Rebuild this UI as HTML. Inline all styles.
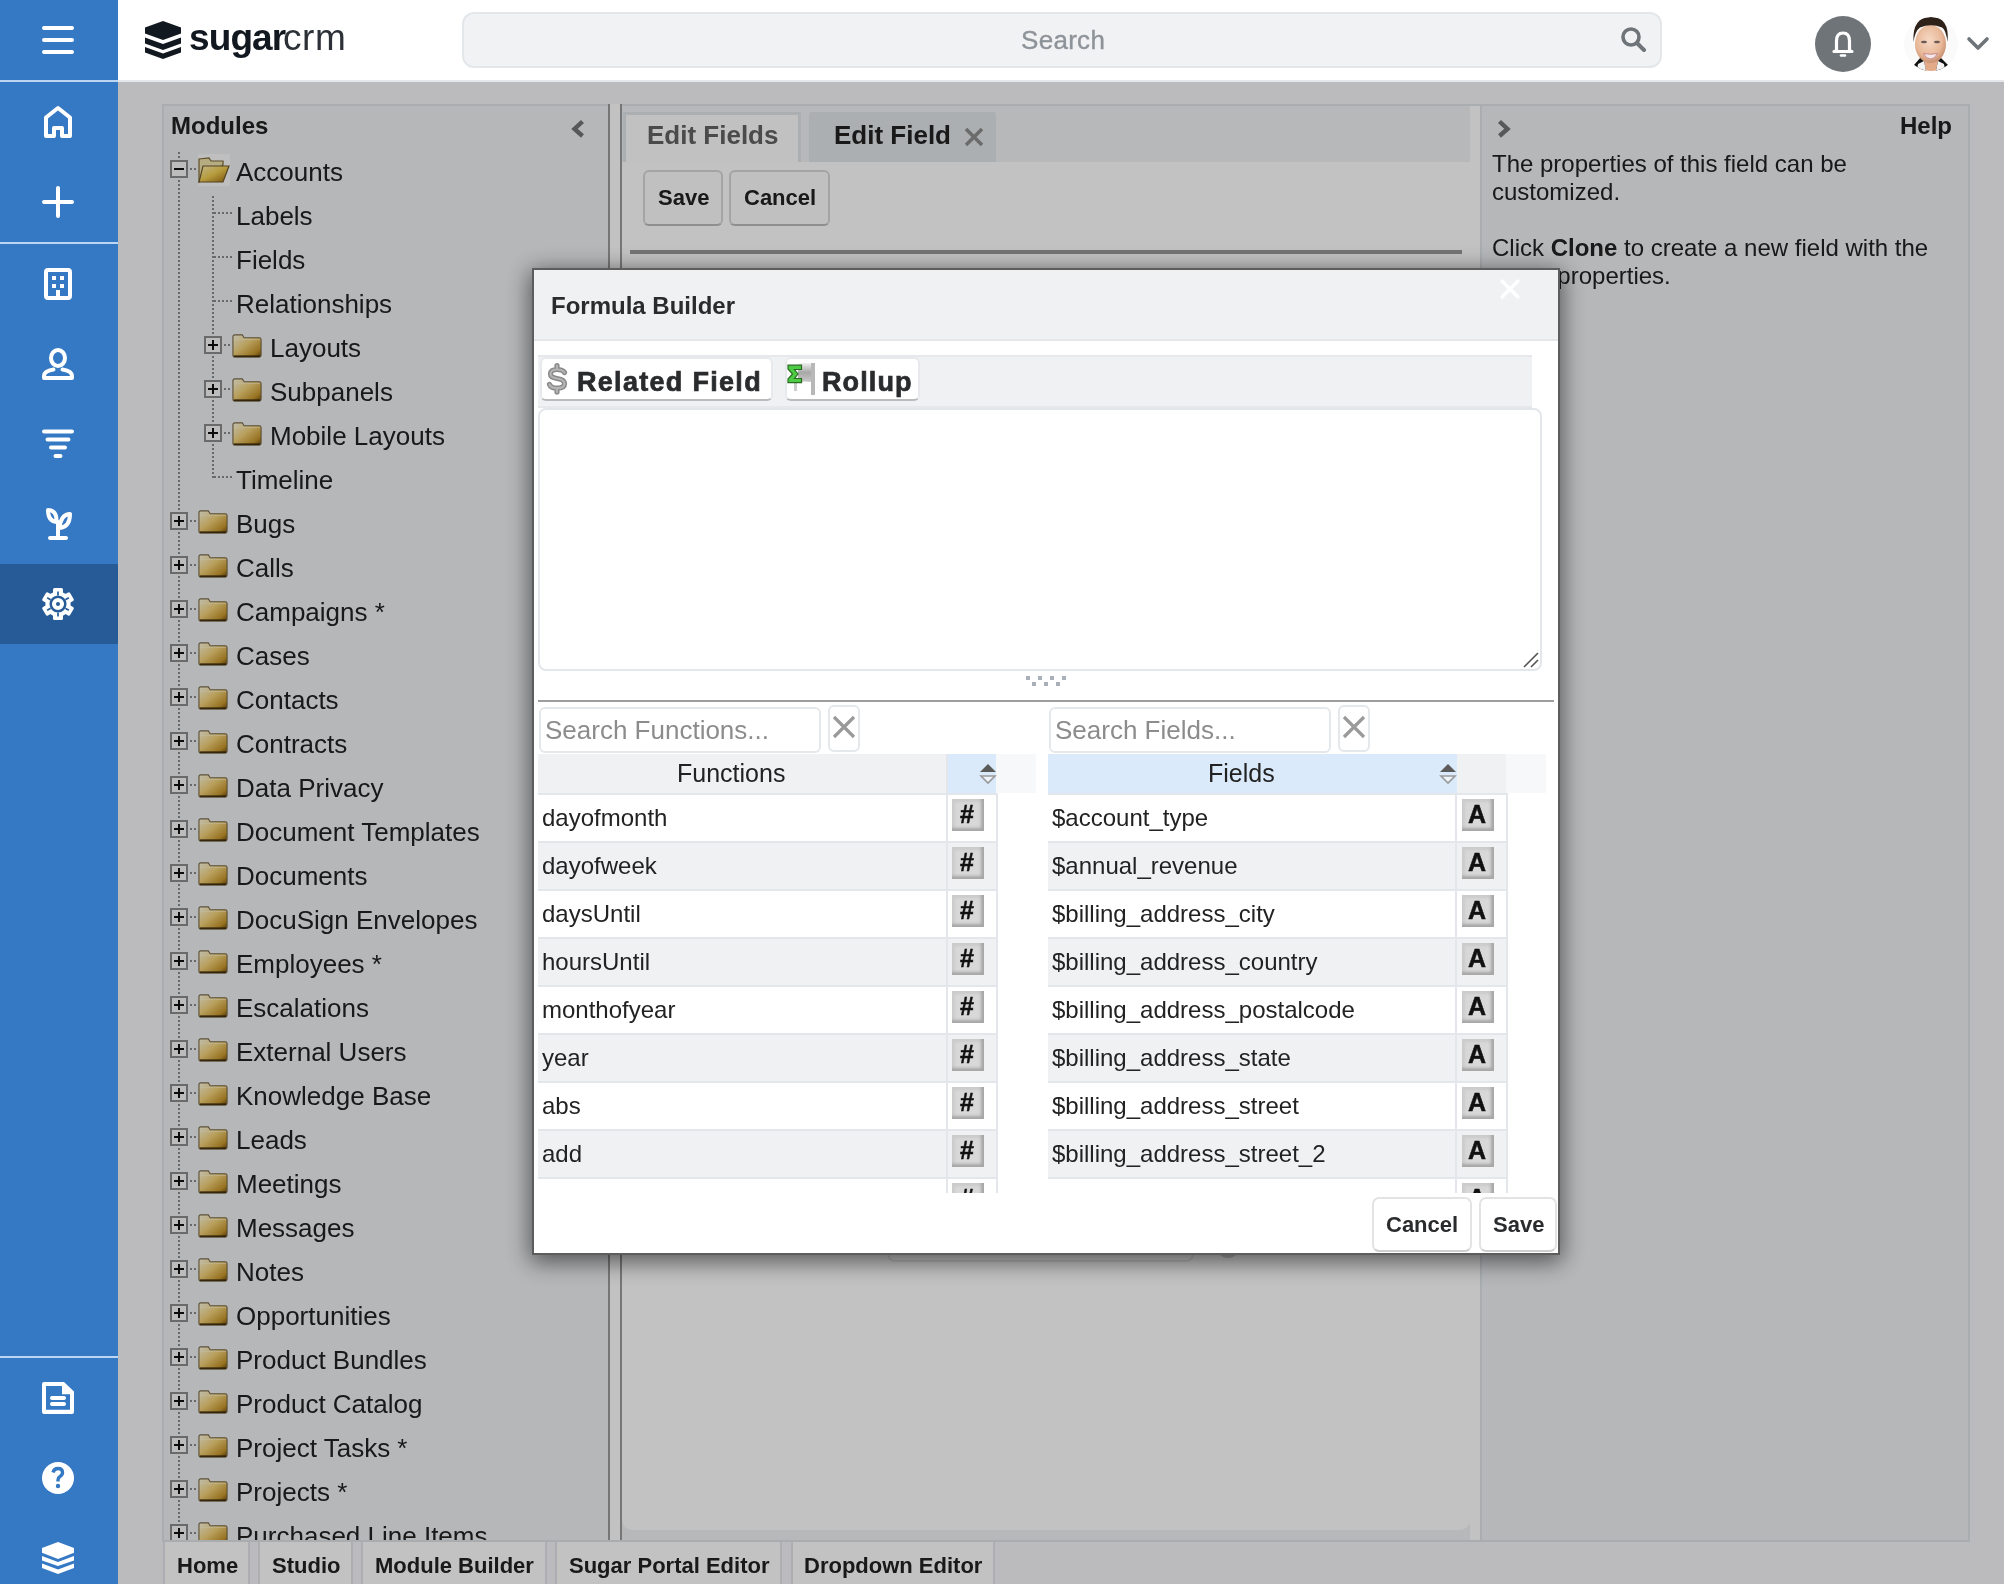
<!DOCTYPE html><html><head><meta charset="utf-8"><style>
html,body{margin:0;padding:0;}
body{width:2004px;height:1584px;position:relative;overflow:hidden;background:#f6f6f8;font-family:"Liberation Sans", sans-serif;color:#222;}
.t{position:absolute;white-space:nowrap;will-change:transform;}
.b{position:absolute;box-sizing:border-box;}
svg{position:absolute;overflow:visible;}
</style></head><body>
<div class="b" style="left:118px;top:82px;width:1886px;height:1502px;background:#f6f6f9;"></div>
<div class="b" style="left:162px;top:104px;width:446px;height:1437px;background:#eff1f3;border-left:2px solid #dee4e8;border-top:2px solid #dee4e8;"></div>
<div class="t" style="left:171px;top:113.7px;font-size:24px;line-height:24px;font-weight:bold;color:#222;">Modules</div>
<svg style="left:568px;top:116px;filter:blur(0.5px)" width="20" height="24"><path d="M14.5 5.5 L6.5 13 L14.5 20" fill="none" stroke="#747474" stroke-width="4.4"/></svg>
<div style="position:absolute;left:162px;top:104px;width:446px;height:1436px;overflow:hidden;">
<div class="b" style="left:16px;top:48px;width:2px;height:1388px;background-image:linear-gradient(to bottom,#8a8a8a 50%,transparent 50%);background-size:2px 4px;"></div>
<div class="b" style="left:50px;top:92px;width:2px;height:282px;background-image:linear-gradient(to bottom,#8a8a8a 50%,transparent 50%);background-size:2px 4px;"></div>
<div class="b" style="left:8px;top:56px;width:18px;height:18px;border:2px solid #8c8c8c;background:#f8f8f8;"></div>
<div class="b" style="left:12px;top:64px;width:10px;height:2px;background:#111;"></div>
<div class="b" style="left:28px;top:64px;width:8px;height:2px;background-image:linear-gradient(to right,#8a8a8a 50%,transparent 50%);background-size:4px 2px;"></div>
<div class="b" style="left:36px;top:50px;width:32px;height:32px;background:#fbfbfb;"></div><svg style="left:36px;top:50px" width="32" height="32" viewBox="0 0 32 32"><defs><linearGradient id="fo" x1="0" y1="0" x2="1" y2="1"><stop offset="0" stop-color="#fff4b8"/><stop offset="0.5" stop-color="#f0cc50"/><stop offset="1" stop-color="#9a6a10"/></linearGradient></defs><path d="M1 5 L11 4 L13 7 L25 7 L25 11 L1 28 Z" fill="#efe3aa" stroke="#7a6634" stroke-width="1.2"/><path d="M5 12 L31 12 L25 28 L1 28 Z" fill="url(#fo)" stroke="#6d5a2e" stroke-width="1.2"/></svg>
<div class="t" style="left:74px;top:55.0px;font-size:26px;line-height:26px;">Accounts</div>
<div class="b" style="left:52px;top:108px;width:18px;height:2px;background-image:linear-gradient(to right,#8a8a8a 50%,transparent 50%);background-size:4px 2px;"></div>
<div class="t" style="left:74px;top:99.0px;font-size:26px;line-height:26px;">Labels</div>
<div class="b" style="left:52px;top:152px;width:18px;height:2px;background-image:linear-gradient(to right,#8a8a8a 50%,transparent 50%);background-size:4px 2px;"></div>
<div class="t" style="left:74px;top:143.0px;font-size:26px;line-height:26px;">Fields</div>
<div class="b" style="left:52px;top:196px;width:18px;height:2px;background-image:linear-gradient(to right,#8a8a8a 50%,transparent 50%);background-size:4px 2px;"></div>
<div class="t" style="left:74px;top:187.0px;font-size:26px;line-height:26px;">Relationships</div>
<div class="b" style="left:42px;top:232px;width:18px;height:18px;border:2px solid #8c8c8c;background:#f8f8f8;"></div>
<div class="b" style="left:46px;top:240px;width:10px;height:2px;background:#111;"></div>
<div class="b" style="left:50px;top:236px;width:2px;height:10px;background:#111;"></div>
<div class="b" style="left:62px;top:240px;width:8px;height:2px;background-image:linear-gradient(to right,#8a8a8a 50%,transparent 50%);background-size:4px 2px;"></div>
<svg style="left:70px;top:230px" width="30" height="24" viewBox="0 0 32 26" preserveAspectRatio="none"><defs><linearGradient id="fg" x1="0" y1="0" x2="1" y2="1"><stop offset="0" stop-color="#fffbe6"/><stop offset="0.45" stop-color="#f2d27a"/><stop offset="0.8" stop-color="#c8982e"/><stop offset="1" stop-color="#6a4808"/></linearGradient></defs><path d="M1 3 Q1 1 3 1 L11 1 L13 4 L29 4 Q31 4 31 6 L31 23 Q31 25 29 25 L3 25 Q1 25 1 23 Z" fill="url(#fg)" stroke="#7a6a48" stroke-width="1.2"/><path d="M2 24 H30" stroke="#3a2a10" stroke-width="1.6"/><path d="M2 6 L30 6" stroke="#fff6d0" stroke-width="1" opacity="0.6"/></svg>
<div class="t" style="left:108px;top:231.0px;font-size:26px;line-height:26px;">Layouts</div>
<div class="b" style="left:42px;top:276px;width:18px;height:18px;border:2px solid #8c8c8c;background:#f8f8f8;"></div>
<div class="b" style="left:46px;top:284px;width:10px;height:2px;background:#111;"></div>
<div class="b" style="left:50px;top:280px;width:2px;height:10px;background:#111;"></div>
<div class="b" style="left:62px;top:284px;width:8px;height:2px;background-image:linear-gradient(to right,#8a8a8a 50%,transparent 50%);background-size:4px 2px;"></div>
<svg style="left:70px;top:274px" width="30" height="24" viewBox="0 0 32 26" preserveAspectRatio="none"><defs><linearGradient id="fg" x1="0" y1="0" x2="1" y2="1"><stop offset="0" stop-color="#fffbe6"/><stop offset="0.45" stop-color="#f2d27a"/><stop offset="0.8" stop-color="#c8982e"/><stop offset="1" stop-color="#6a4808"/></linearGradient></defs><path d="M1 3 Q1 1 3 1 L11 1 L13 4 L29 4 Q31 4 31 6 L31 23 Q31 25 29 25 L3 25 Q1 25 1 23 Z" fill="url(#fg)" stroke="#7a6a48" stroke-width="1.2"/><path d="M2 24 H30" stroke="#3a2a10" stroke-width="1.6"/><path d="M2 6 L30 6" stroke="#fff6d0" stroke-width="1" opacity="0.6"/></svg>
<div class="t" style="left:108px;top:275.0px;font-size:26px;line-height:26px;">Subpanels</div>
<div class="b" style="left:42px;top:320px;width:18px;height:18px;border:2px solid #8c8c8c;background:#f8f8f8;"></div>
<div class="b" style="left:46px;top:328px;width:10px;height:2px;background:#111;"></div>
<div class="b" style="left:50px;top:324px;width:2px;height:10px;background:#111;"></div>
<div class="b" style="left:62px;top:328px;width:8px;height:2px;background-image:linear-gradient(to right,#8a8a8a 50%,transparent 50%);background-size:4px 2px;"></div>
<svg style="left:70px;top:318px" width="30" height="24" viewBox="0 0 32 26" preserveAspectRatio="none"><defs><linearGradient id="fg" x1="0" y1="0" x2="1" y2="1"><stop offset="0" stop-color="#fffbe6"/><stop offset="0.45" stop-color="#f2d27a"/><stop offset="0.8" stop-color="#c8982e"/><stop offset="1" stop-color="#6a4808"/></linearGradient></defs><path d="M1 3 Q1 1 3 1 L11 1 L13 4 L29 4 Q31 4 31 6 L31 23 Q31 25 29 25 L3 25 Q1 25 1 23 Z" fill="url(#fg)" stroke="#7a6a48" stroke-width="1.2"/><path d="M2 24 H30" stroke="#3a2a10" stroke-width="1.6"/><path d="M2 6 L30 6" stroke="#fff6d0" stroke-width="1" opacity="0.6"/></svg>
<div class="t" style="left:108px;top:319.0px;font-size:26px;line-height:26px;">Mobile Layouts</div>
<div class="b" style="left:52px;top:372px;width:18px;height:2px;background-image:linear-gradient(to right,#8a8a8a 50%,transparent 50%);background-size:4px 2px;"></div>
<div class="t" style="left:74px;top:363.0px;font-size:26px;line-height:26px;">Timeline</div>
<div class="b" style="left:8px;top:408px;width:18px;height:18px;border:2px solid #8c8c8c;background:#f8f8f8;"></div>
<div class="b" style="left:12px;top:416px;width:10px;height:2px;background:#111;"></div>
<div class="b" style="left:16px;top:412px;width:2px;height:10px;background:#111;"></div>
<div class="b" style="left:28px;top:416px;width:8px;height:2px;background-image:linear-gradient(to right,#8a8a8a 50%,transparent 50%);background-size:4px 2px;"></div>
<svg style="left:36px;top:406px" width="30" height="24" viewBox="0 0 32 26" preserveAspectRatio="none"><defs><linearGradient id="fg" x1="0" y1="0" x2="1" y2="1"><stop offset="0" stop-color="#fffbe6"/><stop offset="0.45" stop-color="#f2d27a"/><stop offset="0.8" stop-color="#c8982e"/><stop offset="1" stop-color="#6a4808"/></linearGradient></defs><path d="M1 3 Q1 1 3 1 L11 1 L13 4 L29 4 Q31 4 31 6 L31 23 Q31 25 29 25 L3 25 Q1 25 1 23 Z" fill="url(#fg)" stroke="#7a6a48" stroke-width="1.2"/><path d="M2 24 H30" stroke="#3a2a10" stroke-width="1.6"/><path d="M2 6 L30 6" stroke="#fff6d0" stroke-width="1" opacity="0.6"/></svg>
<div class="t" style="left:74px;top:407.0px;font-size:26px;line-height:26px;">Bugs</div>
<div class="b" style="left:8px;top:452px;width:18px;height:18px;border:2px solid #8c8c8c;background:#f8f8f8;"></div>
<div class="b" style="left:12px;top:460px;width:10px;height:2px;background:#111;"></div>
<div class="b" style="left:16px;top:456px;width:2px;height:10px;background:#111;"></div>
<div class="b" style="left:28px;top:460px;width:8px;height:2px;background-image:linear-gradient(to right,#8a8a8a 50%,transparent 50%);background-size:4px 2px;"></div>
<svg style="left:36px;top:450px" width="30" height="24" viewBox="0 0 32 26" preserveAspectRatio="none"><defs><linearGradient id="fg" x1="0" y1="0" x2="1" y2="1"><stop offset="0" stop-color="#fffbe6"/><stop offset="0.45" stop-color="#f2d27a"/><stop offset="0.8" stop-color="#c8982e"/><stop offset="1" stop-color="#6a4808"/></linearGradient></defs><path d="M1 3 Q1 1 3 1 L11 1 L13 4 L29 4 Q31 4 31 6 L31 23 Q31 25 29 25 L3 25 Q1 25 1 23 Z" fill="url(#fg)" stroke="#7a6a48" stroke-width="1.2"/><path d="M2 24 H30" stroke="#3a2a10" stroke-width="1.6"/><path d="M2 6 L30 6" stroke="#fff6d0" stroke-width="1" opacity="0.6"/></svg>
<div class="t" style="left:74px;top:451.0px;font-size:26px;line-height:26px;">Calls</div>
<div class="b" style="left:8px;top:496px;width:18px;height:18px;border:2px solid #8c8c8c;background:#f8f8f8;"></div>
<div class="b" style="left:12px;top:504px;width:10px;height:2px;background:#111;"></div>
<div class="b" style="left:16px;top:500px;width:2px;height:10px;background:#111;"></div>
<div class="b" style="left:28px;top:504px;width:8px;height:2px;background-image:linear-gradient(to right,#8a8a8a 50%,transparent 50%);background-size:4px 2px;"></div>
<svg style="left:36px;top:494px" width="30" height="24" viewBox="0 0 32 26" preserveAspectRatio="none"><defs><linearGradient id="fg" x1="0" y1="0" x2="1" y2="1"><stop offset="0" stop-color="#fffbe6"/><stop offset="0.45" stop-color="#f2d27a"/><stop offset="0.8" stop-color="#c8982e"/><stop offset="1" stop-color="#6a4808"/></linearGradient></defs><path d="M1 3 Q1 1 3 1 L11 1 L13 4 L29 4 Q31 4 31 6 L31 23 Q31 25 29 25 L3 25 Q1 25 1 23 Z" fill="url(#fg)" stroke="#7a6a48" stroke-width="1.2"/><path d="M2 24 H30" stroke="#3a2a10" stroke-width="1.6"/><path d="M2 6 L30 6" stroke="#fff6d0" stroke-width="1" opacity="0.6"/></svg>
<div class="t" style="left:74px;top:495.0px;font-size:26px;line-height:26px;">Campaigns *</div>
<div class="b" style="left:8px;top:540px;width:18px;height:18px;border:2px solid #8c8c8c;background:#f8f8f8;"></div>
<div class="b" style="left:12px;top:548px;width:10px;height:2px;background:#111;"></div>
<div class="b" style="left:16px;top:544px;width:2px;height:10px;background:#111;"></div>
<div class="b" style="left:28px;top:548px;width:8px;height:2px;background-image:linear-gradient(to right,#8a8a8a 50%,transparent 50%);background-size:4px 2px;"></div>
<svg style="left:36px;top:538px" width="30" height="24" viewBox="0 0 32 26" preserveAspectRatio="none"><defs><linearGradient id="fg" x1="0" y1="0" x2="1" y2="1"><stop offset="0" stop-color="#fffbe6"/><stop offset="0.45" stop-color="#f2d27a"/><stop offset="0.8" stop-color="#c8982e"/><stop offset="1" stop-color="#6a4808"/></linearGradient></defs><path d="M1 3 Q1 1 3 1 L11 1 L13 4 L29 4 Q31 4 31 6 L31 23 Q31 25 29 25 L3 25 Q1 25 1 23 Z" fill="url(#fg)" stroke="#7a6a48" stroke-width="1.2"/><path d="M2 24 H30" stroke="#3a2a10" stroke-width="1.6"/><path d="M2 6 L30 6" stroke="#fff6d0" stroke-width="1" opacity="0.6"/></svg>
<div class="t" style="left:74px;top:539.0px;font-size:26px;line-height:26px;">Cases</div>
<div class="b" style="left:8px;top:584px;width:18px;height:18px;border:2px solid #8c8c8c;background:#f8f8f8;"></div>
<div class="b" style="left:12px;top:592px;width:10px;height:2px;background:#111;"></div>
<div class="b" style="left:16px;top:588px;width:2px;height:10px;background:#111;"></div>
<div class="b" style="left:28px;top:592px;width:8px;height:2px;background-image:linear-gradient(to right,#8a8a8a 50%,transparent 50%);background-size:4px 2px;"></div>
<svg style="left:36px;top:582px" width="30" height="24" viewBox="0 0 32 26" preserveAspectRatio="none"><defs><linearGradient id="fg" x1="0" y1="0" x2="1" y2="1"><stop offset="0" stop-color="#fffbe6"/><stop offset="0.45" stop-color="#f2d27a"/><stop offset="0.8" stop-color="#c8982e"/><stop offset="1" stop-color="#6a4808"/></linearGradient></defs><path d="M1 3 Q1 1 3 1 L11 1 L13 4 L29 4 Q31 4 31 6 L31 23 Q31 25 29 25 L3 25 Q1 25 1 23 Z" fill="url(#fg)" stroke="#7a6a48" stroke-width="1.2"/><path d="M2 24 H30" stroke="#3a2a10" stroke-width="1.6"/><path d="M2 6 L30 6" stroke="#fff6d0" stroke-width="1" opacity="0.6"/></svg>
<div class="t" style="left:74px;top:583.0px;font-size:26px;line-height:26px;">Contacts</div>
<div class="b" style="left:8px;top:628px;width:18px;height:18px;border:2px solid #8c8c8c;background:#f8f8f8;"></div>
<div class="b" style="left:12px;top:636px;width:10px;height:2px;background:#111;"></div>
<div class="b" style="left:16px;top:632px;width:2px;height:10px;background:#111;"></div>
<div class="b" style="left:28px;top:636px;width:8px;height:2px;background-image:linear-gradient(to right,#8a8a8a 50%,transparent 50%);background-size:4px 2px;"></div>
<svg style="left:36px;top:626px" width="30" height="24" viewBox="0 0 32 26" preserveAspectRatio="none"><defs><linearGradient id="fg" x1="0" y1="0" x2="1" y2="1"><stop offset="0" stop-color="#fffbe6"/><stop offset="0.45" stop-color="#f2d27a"/><stop offset="0.8" stop-color="#c8982e"/><stop offset="1" stop-color="#6a4808"/></linearGradient></defs><path d="M1 3 Q1 1 3 1 L11 1 L13 4 L29 4 Q31 4 31 6 L31 23 Q31 25 29 25 L3 25 Q1 25 1 23 Z" fill="url(#fg)" stroke="#7a6a48" stroke-width="1.2"/><path d="M2 24 H30" stroke="#3a2a10" stroke-width="1.6"/><path d="M2 6 L30 6" stroke="#fff6d0" stroke-width="1" opacity="0.6"/></svg>
<div class="t" style="left:74px;top:627.0px;font-size:26px;line-height:26px;">Contracts</div>
<div class="b" style="left:8px;top:672px;width:18px;height:18px;border:2px solid #8c8c8c;background:#f8f8f8;"></div>
<div class="b" style="left:12px;top:680px;width:10px;height:2px;background:#111;"></div>
<div class="b" style="left:16px;top:676px;width:2px;height:10px;background:#111;"></div>
<div class="b" style="left:28px;top:680px;width:8px;height:2px;background-image:linear-gradient(to right,#8a8a8a 50%,transparent 50%);background-size:4px 2px;"></div>
<svg style="left:36px;top:670px" width="30" height="24" viewBox="0 0 32 26" preserveAspectRatio="none"><defs><linearGradient id="fg" x1="0" y1="0" x2="1" y2="1"><stop offset="0" stop-color="#fffbe6"/><stop offset="0.45" stop-color="#f2d27a"/><stop offset="0.8" stop-color="#c8982e"/><stop offset="1" stop-color="#6a4808"/></linearGradient></defs><path d="M1 3 Q1 1 3 1 L11 1 L13 4 L29 4 Q31 4 31 6 L31 23 Q31 25 29 25 L3 25 Q1 25 1 23 Z" fill="url(#fg)" stroke="#7a6a48" stroke-width="1.2"/><path d="M2 24 H30" stroke="#3a2a10" stroke-width="1.6"/><path d="M2 6 L30 6" stroke="#fff6d0" stroke-width="1" opacity="0.6"/></svg>
<div class="t" style="left:74px;top:671.0px;font-size:26px;line-height:26px;">Data Privacy</div>
<div class="b" style="left:8px;top:716px;width:18px;height:18px;border:2px solid #8c8c8c;background:#f8f8f8;"></div>
<div class="b" style="left:12px;top:724px;width:10px;height:2px;background:#111;"></div>
<div class="b" style="left:16px;top:720px;width:2px;height:10px;background:#111;"></div>
<div class="b" style="left:28px;top:724px;width:8px;height:2px;background-image:linear-gradient(to right,#8a8a8a 50%,transparent 50%);background-size:4px 2px;"></div>
<svg style="left:36px;top:714px" width="30" height="24" viewBox="0 0 32 26" preserveAspectRatio="none"><defs><linearGradient id="fg" x1="0" y1="0" x2="1" y2="1"><stop offset="0" stop-color="#fffbe6"/><stop offset="0.45" stop-color="#f2d27a"/><stop offset="0.8" stop-color="#c8982e"/><stop offset="1" stop-color="#6a4808"/></linearGradient></defs><path d="M1 3 Q1 1 3 1 L11 1 L13 4 L29 4 Q31 4 31 6 L31 23 Q31 25 29 25 L3 25 Q1 25 1 23 Z" fill="url(#fg)" stroke="#7a6a48" stroke-width="1.2"/><path d="M2 24 H30" stroke="#3a2a10" stroke-width="1.6"/><path d="M2 6 L30 6" stroke="#fff6d0" stroke-width="1" opacity="0.6"/></svg>
<div class="t" style="left:74px;top:715.0px;font-size:26px;line-height:26px;">Document Templates</div>
<div class="b" style="left:8px;top:760px;width:18px;height:18px;border:2px solid #8c8c8c;background:#f8f8f8;"></div>
<div class="b" style="left:12px;top:768px;width:10px;height:2px;background:#111;"></div>
<div class="b" style="left:16px;top:764px;width:2px;height:10px;background:#111;"></div>
<div class="b" style="left:28px;top:768px;width:8px;height:2px;background-image:linear-gradient(to right,#8a8a8a 50%,transparent 50%);background-size:4px 2px;"></div>
<svg style="left:36px;top:758px" width="30" height="24" viewBox="0 0 32 26" preserveAspectRatio="none"><defs><linearGradient id="fg" x1="0" y1="0" x2="1" y2="1"><stop offset="0" stop-color="#fffbe6"/><stop offset="0.45" stop-color="#f2d27a"/><stop offset="0.8" stop-color="#c8982e"/><stop offset="1" stop-color="#6a4808"/></linearGradient></defs><path d="M1 3 Q1 1 3 1 L11 1 L13 4 L29 4 Q31 4 31 6 L31 23 Q31 25 29 25 L3 25 Q1 25 1 23 Z" fill="url(#fg)" stroke="#7a6a48" stroke-width="1.2"/><path d="M2 24 H30" stroke="#3a2a10" stroke-width="1.6"/><path d="M2 6 L30 6" stroke="#fff6d0" stroke-width="1" opacity="0.6"/></svg>
<div class="t" style="left:74px;top:759.0px;font-size:26px;line-height:26px;">Documents</div>
<div class="b" style="left:8px;top:804px;width:18px;height:18px;border:2px solid #8c8c8c;background:#f8f8f8;"></div>
<div class="b" style="left:12px;top:812px;width:10px;height:2px;background:#111;"></div>
<div class="b" style="left:16px;top:808px;width:2px;height:10px;background:#111;"></div>
<div class="b" style="left:28px;top:812px;width:8px;height:2px;background-image:linear-gradient(to right,#8a8a8a 50%,transparent 50%);background-size:4px 2px;"></div>
<svg style="left:36px;top:802px" width="30" height="24" viewBox="0 0 32 26" preserveAspectRatio="none"><defs><linearGradient id="fg" x1="0" y1="0" x2="1" y2="1"><stop offset="0" stop-color="#fffbe6"/><stop offset="0.45" stop-color="#f2d27a"/><stop offset="0.8" stop-color="#c8982e"/><stop offset="1" stop-color="#6a4808"/></linearGradient></defs><path d="M1 3 Q1 1 3 1 L11 1 L13 4 L29 4 Q31 4 31 6 L31 23 Q31 25 29 25 L3 25 Q1 25 1 23 Z" fill="url(#fg)" stroke="#7a6a48" stroke-width="1.2"/><path d="M2 24 H30" stroke="#3a2a10" stroke-width="1.6"/><path d="M2 6 L30 6" stroke="#fff6d0" stroke-width="1" opacity="0.6"/></svg>
<div class="t" style="left:74px;top:803.0px;font-size:26px;line-height:26px;">DocuSign Envelopes</div>
<div class="b" style="left:8px;top:848px;width:18px;height:18px;border:2px solid #8c8c8c;background:#f8f8f8;"></div>
<div class="b" style="left:12px;top:856px;width:10px;height:2px;background:#111;"></div>
<div class="b" style="left:16px;top:852px;width:2px;height:10px;background:#111;"></div>
<div class="b" style="left:28px;top:856px;width:8px;height:2px;background-image:linear-gradient(to right,#8a8a8a 50%,transparent 50%);background-size:4px 2px;"></div>
<svg style="left:36px;top:846px" width="30" height="24" viewBox="0 0 32 26" preserveAspectRatio="none"><defs><linearGradient id="fg" x1="0" y1="0" x2="1" y2="1"><stop offset="0" stop-color="#fffbe6"/><stop offset="0.45" stop-color="#f2d27a"/><stop offset="0.8" stop-color="#c8982e"/><stop offset="1" stop-color="#6a4808"/></linearGradient></defs><path d="M1 3 Q1 1 3 1 L11 1 L13 4 L29 4 Q31 4 31 6 L31 23 Q31 25 29 25 L3 25 Q1 25 1 23 Z" fill="url(#fg)" stroke="#7a6a48" stroke-width="1.2"/><path d="M2 24 H30" stroke="#3a2a10" stroke-width="1.6"/><path d="M2 6 L30 6" stroke="#fff6d0" stroke-width="1" opacity="0.6"/></svg>
<div class="t" style="left:74px;top:847.0px;font-size:26px;line-height:26px;">Employees *</div>
<div class="b" style="left:8px;top:892px;width:18px;height:18px;border:2px solid #8c8c8c;background:#f8f8f8;"></div>
<div class="b" style="left:12px;top:900px;width:10px;height:2px;background:#111;"></div>
<div class="b" style="left:16px;top:896px;width:2px;height:10px;background:#111;"></div>
<div class="b" style="left:28px;top:900px;width:8px;height:2px;background-image:linear-gradient(to right,#8a8a8a 50%,transparent 50%);background-size:4px 2px;"></div>
<svg style="left:36px;top:890px" width="30" height="24" viewBox="0 0 32 26" preserveAspectRatio="none"><defs><linearGradient id="fg" x1="0" y1="0" x2="1" y2="1"><stop offset="0" stop-color="#fffbe6"/><stop offset="0.45" stop-color="#f2d27a"/><stop offset="0.8" stop-color="#c8982e"/><stop offset="1" stop-color="#6a4808"/></linearGradient></defs><path d="M1 3 Q1 1 3 1 L11 1 L13 4 L29 4 Q31 4 31 6 L31 23 Q31 25 29 25 L3 25 Q1 25 1 23 Z" fill="url(#fg)" stroke="#7a6a48" stroke-width="1.2"/><path d="M2 24 H30" stroke="#3a2a10" stroke-width="1.6"/><path d="M2 6 L30 6" stroke="#fff6d0" stroke-width="1" opacity="0.6"/></svg>
<div class="t" style="left:74px;top:891.0px;font-size:26px;line-height:26px;">Escalations</div>
<div class="b" style="left:8px;top:936px;width:18px;height:18px;border:2px solid #8c8c8c;background:#f8f8f8;"></div>
<div class="b" style="left:12px;top:944px;width:10px;height:2px;background:#111;"></div>
<div class="b" style="left:16px;top:940px;width:2px;height:10px;background:#111;"></div>
<div class="b" style="left:28px;top:944px;width:8px;height:2px;background-image:linear-gradient(to right,#8a8a8a 50%,transparent 50%);background-size:4px 2px;"></div>
<svg style="left:36px;top:934px" width="30" height="24" viewBox="0 0 32 26" preserveAspectRatio="none"><defs><linearGradient id="fg" x1="0" y1="0" x2="1" y2="1"><stop offset="0" stop-color="#fffbe6"/><stop offset="0.45" stop-color="#f2d27a"/><stop offset="0.8" stop-color="#c8982e"/><stop offset="1" stop-color="#6a4808"/></linearGradient></defs><path d="M1 3 Q1 1 3 1 L11 1 L13 4 L29 4 Q31 4 31 6 L31 23 Q31 25 29 25 L3 25 Q1 25 1 23 Z" fill="url(#fg)" stroke="#7a6a48" stroke-width="1.2"/><path d="M2 24 H30" stroke="#3a2a10" stroke-width="1.6"/><path d="M2 6 L30 6" stroke="#fff6d0" stroke-width="1" opacity="0.6"/></svg>
<div class="t" style="left:74px;top:935.0px;font-size:26px;line-height:26px;">External Users</div>
<div class="b" style="left:8px;top:980px;width:18px;height:18px;border:2px solid #8c8c8c;background:#f8f8f8;"></div>
<div class="b" style="left:12px;top:988px;width:10px;height:2px;background:#111;"></div>
<div class="b" style="left:16px;top:984px;width:2px;height:10px;background:#111;"></div>
<div class="b" style="left:28px;top:988px;width:8px;height:2px;background-image:linear-gradient(to right,#8a8a8a 50%,transparent 50%);background-size:4px 2px;"></div>
<svg style="left:36px;top:978px" width="30" height="24" viewBox="0 0 32 26" preserveAspectRatio="none"><defs><linearGradient id="fg" x1="0" y1="0" x2="1" y2="1"><stop offset="0" stop-color="#fffbe6"/><stop offset="0.45" stop-color="#f2d27a"/><stop offset="0.8" stop-color="#c8982e"/><stop offset="1" stop-color="#6a4808"/></linearGradient></defs><path d="M1 3 Q1 1 3 1 L11 1 L13 4 L29 4 Q31 4 31 6 L31 23 Q31 25 29 25 L3 25 Q1 25 1 23 Z" fill="url(#fg)" stroke="#7a6a48" stroke-width="1.2"/><path d="M2 24 H30" stroke="#3a2a10" stroke-width="1.6"/><path d="M2 6 L30 6" stroke="#fff6d0" stroke-width="1" opacity="0.6"/></svg>
<div class="t" style="left:74px;top:979.0px;font-size:26px;line-height:26px;">Knowledge Base</div>
<div class="b" style="left:8px;top:1024px;width:18px;height:18px;border:2px solid #8c8c8c;background:#f8f8f8;"></div>
<div class="b" style="left:12px;top:1032px;width:10px;height:2px;background:#111;"></div>
<div class="b" style="left:16px;top:1028px;width:2px;height:10px;background:#111;"></div>
<div class="b" style="left:28px;top:1032px;width:8px;height:2px;background-image:linear-gradient(to right,#8a8a8a 50%,transparent 50%);background-size:4px 2px;"></div>
<svg style="left:36px;top:1022px" width="30" height="24" viewBox="0 0 32 26" preserveAspectRatio="none"><defs><linearGradient id="fg" x1="0" y1="0" x2="1" y2="1"><stop offset="0" stop-color="#fffbe6"/><stop offset="0.45" stop-color="#f2d27a"/><stop offset="0.8" stop-color="#c8982e"/><stop offset="1" stop-color="#6a4808"/></linearGradient></defs><path d="M1 3 Q1 1 3 1 L11 1 L13 4 L29 4 Q31 4 31 6 L31 23 Q31 25 29 25 L3 25 Q1 25 1 23 Z" fill="url(#fg)" stroke="#7a6a48" stroke-width="1.2"/><path d="M2 24 H30" stroke="#3a2a10" stroke-width="1.6"/><path d="M2 6 L30 6" stroke="#fff6d0" stroke-width="1" opacity="0.6"/></svg>
<div class="t" style="left:74px;top:1023.0px;font-size:26px;line-height:26px;">Leads</div>
<div class="b" style="left:8px;top:1068px;width:18px;height:18px;border:2px solid #8c8c8c;background:#f8f8f8;"></div>
<div class="b" style="left:12px;top:1076px;width:10px;height:2px;background:#111;"></div>
<div class="b" style="left:16px;top:1072px;width:2px;height:10px;background:#111;"></div>
<div class="b" style="left:28px;top:1076px;width:8px;height:2px;background-image:linear-gradient(to right,#8a8a8a 50%,transparent 50%);background-size:4px 2px;"></div>
<svg style="left:36px;top:1066px" width="30" height="24" viewBox="0 0 32 26" preserveAspectRatio="none"><defs><linearGradient id="fg" x1="0" y1="0" x2="1" y2="1"><stop offset="0" stop-color="#fffbe6"/><stop offset="0.45" stop-color="#f2d27a"/><stop offset="0.8" stop-color="#c8982e"/><stop offset="1" stop-color="#6a4808"/></linearGradient></defs><path d="M1 3 Q1 1 3 1 L11 1 L13 4 L29 4 Q31 4 31 6 L31 23 Q31 25 29 25 L3 25 Q1 25 1 23 Z" fill="url(#fg)" stroke="#7a6a48" stroke-width="1.2"/><path d="M2 24 H30" stroke="#3a2a10" stroke-width="1.6"/><path d="M2 6 L30 6" stroke="#fff6d0" stroke-width="1" opacity="0.6"/></svg>
<div class="t" style="left:74px;top:1067.0px;font-size:26px;line-height:26px;">Meetings</div>
<div class="b" style="left:8px;top:1112px;width:18px;height:18px;border:2px solid #8c8c8c;background:#f8f8f8;"></div>
<div class="b" style="left:12px;top:1120px;width:10px;height:2px;background:#111;"></div>
<div class="b" style="left:16px;top:1116px;width:2px;height:10px;background:#111;"></div>
<div class="b" style="left:28px;top:1120px;width:8px;height:2px;background-image:linear-gradient(to right,#8a8a8a 50%,transparent 50%);background-size:4px 2px;"></div>
<svg style="left:36px;top:1110px" width="30" height="24" viewBox="0 0 32 26" preserveAspectRatio="none"><defs><linearGradient id="fg" x1="0" y1="0" x2="1" y2="1"><stop offset="0" stop-color="#fffbe6"/><stop offset="0.45" stop-color="#f2d27a"/><stop offset="0.8" stop-color="#c8982e"/><stop offset="1" stop-color="#6a4808"/></linearGradient></defs><path d="M1 3 Q1 1 3 1 L11 1 L13 4 L29 4 Q31 4 31 6 L31 23 Q31 25 29 25 L3 25 Q1 25 1 23 Z" fill="url(#fg)" stroke="#7a6a48" stroke-width="1.2"/><path d="M2 24 H30" stroke="#3a2a10" stroke-width="1.6"/><path d="M2 6 L30 6" stroke="#fff6d0" stroke-width="1" opacity="0.6"/></svg>
<div class="t" style="left:74px;top:1111.0px;font-size:26px;line-height:26px;">Messages</div>
<div class="b" style="left:8px;top:1156px;width:18px;height:18px;border:2px solid #8c8c8c;background:#f8f8f8;"></div>
<div class="b" style="left:12px;top:1164px;width:10px;height:2px;background:#111;"></div>
<div class="b" style="left:16px;top:1160px;width:2px;height:10px;background:#111;"></div>
<div class="b" style="left:28px;top:1164px;width:8px;height:2px;background-image:linear-gradient(to right,#8a8a8a 50%,transparent 50%);background-size:4px 2px;"></div>
<svg style="left:36px;top:1154px" width="30" height="24" viewBox="0 0 32 26" preserveAspectRatio="none"><defs><linearGradient id="fg" x1="0" y1="0" x2="1" y2="1"><stop offset="0" stop-color="#fffbe6"/><stop offset="0.45" stop-color="#f2d27a"/><stop offset="0.8" stop-color="#c8982e"/><stop offset="1" stop-color="#6a4808"/></linearGradient></defs><path d="M1 3 Q1 1 3 1 L11 1 L13 4 L29 4 Q31 4 31 6 L31 23 Q31 25 29 25 L3 25 Q1 25 1 23 Z" fill="url(#fg)" stroke="#7a6a48" stroke-width="1.2"/><path d="M2 24 H30" stroke="#3a2a10" stroke-width="1.6"/><path d="M2 6 L30 6" stroke="#fff6d0" stroke-width="1" opacity="0.6"/></svg>
<div class="t" style="left:74px;top:1155.0px;font-size:26px;line-height:26px;">Notes</div>
<div class="b" style="left:8px;top:1200px;width:18px;height:18px;border:2px solid #8c8c8c;background:#f8f8f8;"></div>
<div class="b" style="left:12px;top:1208px;width:10px;height:2px;background:#111;"></div>
<div class="b" style="left:16px;top:1204px;width:2px;height:10px;background:#111;"></div>
<div class="b" style="left:28px;top:1208px;width:8px;height:2px;background-image:linear-gradient(to right,#8a8a8a 50%,transparent 50%);background-size:4px 2px;"></div>
<svg style="left:36px;top:1198px" width="30" height="24" viewBox="0 0 32 26" preserveAspectRatio="none"><defs><linearGradient id="fg" x1="0" y1="0" x2="1" y2="1"><stop offset="0" stop-color="#fffbe6"/><stop offset="0.45" stop-color="#f2d27a"/><stop offset="0.8" stop-color="#c8982e"/><stop offset="1" stop-color="#6a4808"/></linearGradient></defs><path d="M1 3 Q1 1 3 1 L11 1 L13 4 L29 4 Q31 4 31 6 L31 23 Q31 25 29 25 L3 25 Q1 25 1 23 Z" fill="url(#fg)" stroke="#7a6a48" stroke-width="1.2"/><path d="M2 24 H30" stroke="#3a2a10" stroke-width="1.6"/><path d="M2 6 L30 6" stroke="#fff6d0" stroke-width="1" opacity="0.6"/></svg>
<div class="t" style="left:74px;top:1199.0px;font-size:26px;line-height:26px;">Opportunities</div>
<div class="b" style="left:8px;top:1244px;width:18px;height:18px;border:2px solid #8c8c8c;background:#f8f8f8;"></div>
<div class="b" style="left:12px;top:1252px;width:10px;height:2px;background:#111;"></div>
<div class="b" style="left:16px;top:1248px;width:2px;height:10px;background:#111;"></div>
<div class="b" style="left:28px;top:1252px;width:8px;height:2px;background-image:linear-gradient(to right,#8a8a8a 50%,transparent 50%);background-size:4px 2px;"></div>
<svg style="left:36px;top:1242px" width="30" height="24" viewBox="0 0 32 26" preserveAspectRatio="none"><defs><linearGradient id="fg" x1="0" y1="0" x2="1" y2="1"><stop offset="0" stop-color="#fffbe6"/><stop offset="0.45" stop-color="#f2d27a"/><stop offset="0.8" stop-color="#c8982e"/><stop offset="1" stop-color="#6a4808"/></linearGradient></defs><path d="M1 3 Q1 1 3 1 L11 1 L13 4 L29 4 Q31 4 31 6 L31 23 Q31 25 29 25 L3 25 Q1 25 1 23 Z" fill="url(#fg)" stroke="#7a6a48" stroke-width="1.2"/><path d="M2 24 H30" stroke="#3a2a10" stroke-width="1.6"/><path d="M2 6 L30 6" stroke="#fff6d0" stroke-width="1" opacity="0.6"/></svg>
<div class="t" style="left:74px;top:1243.0px;font-size:26px;line-height:26px;">Product Bundles</div>
<div class="b" style="left:8px;top:1288px;width:18px;height:18px;border:2px solid #8c8c8c;background:#f8f8f8;"></div>
<div class="b" style="left:12px;top:1296px;width:10px;height:2px;background:#111;"></div>
<div class="b" style="left:16px;top:1292px;width:2px;height:10px;background:#111;"></div>
<div class="b" style="left:28px;top:1296px;width:8px;height:2px;background-image:linear-gradient(to right,#8a8a8a 50%,transparent 50%);background-size:4px 2px;"></div>
<svg style="left:36px;top:1286px" width="30" height="24" viewBox="0 0 32 26" preserveAspectRatio="none"><defs><linearGradient id="fg" x1="0" y1="0" x2="1" y2="1"><stop offset="0" stop-color="#fffbe6"/><stop offset="0.45" stop-color="#f2d27a"/><stop offset="0.8" stop-color="#c8982e"/><stop offset="1" stop-color="#6a4808"/></linearGradient></defs><path d="M1 3 Q1 1 3 1 L11 1 L13 4 L29 4 Q31 4 31 6 L31 23 Q31 25 29 25 L3 25 Q1 25 1 23 Z" fill="url(#fg)" stroke="#7a6a48" stroke-width="1.2"/><path d="M2 24 H30" stroke="#3a2a10" stroke-width="1.6"/><path d="M2 6 L30 6" stroke="#fff6d0" stroke-width="1" opacity="0.6"/></svg>
<div class="t" style="left:74px;top:1287.0px;font-size:26px;line-height:26px;">Product Catalog</div>
<div class="b" style="left:8px;top:1332px;width:18px;height:18px;border:2px solid #8c8c8c;background:#f8f8f8;"></div>
<div class="b" style="left:12px;top:1340px;width:10px;height:2px;background:#111;"></div>
<div class="b" style="left:16px;top:1336px;width:2px;height:10px;background:#111;"></div>
<div class="b" style="left:28px;top:1340px;width:8px;height:2px;background-image:linear-gradient(to right,#8a8a8a 50%,transparent 50%);background-size:4px 2px;"></div>
<svg style="left:36px;top:1330px" width="30" height="24" viewBox="0 0 32 26" preserveAspectRatio="none"><defs><linearGradient id="fg" x1="0" y1="0" x2="1" y2="1"><stop offset="0" stop-color="#fffbe6"/><stop offset="0.45" stop-color="#f2d27a"/><stop offset="0.8" stop-color="#c8982e"/><stop offset="1" stop-color="#6a4808"/></linearGradient></defs><path d="M1 3 Q1 1 3 1 L11 1 L13 4 L29 4 Q31 4 31 6 L31 23 Q31 25 29 25 L3 25 Q1 25 1 23 Z" fill="url(#fg)" stroke="#7a6a48" stroke-width="1.2"/><path d="M2 24 H30" stroke="#3a2a10" stroke-width="1.6"/><path d="M2 6 L30 6" stroke="#fff6d0" stroke-width="1" opacity="0.6"/></svg>
<div class="t" style="left:74px;top:1331.0px;font-size:26px;line-height:26px;">Project Tasks *</div>
<div class="b" style="left:8px;top:1376px;width:18px;height:18px;border:2px solid #8c8c8c;background:#f8f8f8;"></div>
<div class="b" style="left:12px;top:1384px;width:10px;height:2px;background:#111;"></div>
<div class="b" style="left:16px;top:1380px;width:2px;height:10px;background:#111;"></div>
<div class="b" style="left:28px;top:1384px;width:8px;height:2px;background-image:linear-gradient(to right,#8a8a8a 50%,transparent 50%);background-size:4px 2px;"></div>
<svg style="left:36px;top:1374px" width="30" height="24" viewBox="0 0 32 26" preserveAspectRatio="none"><defs><linearGradient id="fg" x1="0" y1="0" x2="1" y2="1"><stop offset="0" stop-color="#fffbe6"/><stop offset="0.45" stop-color="#f2d27a"/><stop offset="0.8" stop-color="#c8982e"/><stop offset="1" stop-color="#6a4808"/></linearGradient></defs><path d="M1 3 Q1 1 3 1 L11 1 L13 4 L29 4 Q31 4 31 6 L31 23 Q31 25 29 25 L3 25 Q1 25 1 23 Z" fill="url(#fg)" stroke="#7a6a48" stroke-width="1.2"/><path d="M2 24 H30" stroke="#3a2a10" stroke-width="1.6"/><path d="M2 6 L30 6" stroke="#fff6d0" stroke-width="1" opacity="0.6"/></svg>
<div class="t" style="left:74px;top:1375.0px;font-size:26px;line-height:26px;">Projects *</div>
<div class="b" style="left:8px;top:1420px;width:18px;height:18px;border:2px solid #8c8c8c;background:#f8f8f8;"></div>
<div class="b" style="left:12px;top:1428px;width:10px;height:2px;background:#111;"></div>
<div class="b" style="left:16px;top:1424px;width:2px;height:10px;background:#111;"></div>
<div class="b" style="left:28px;top:1428px;width:8px;height:2px;background-image:linear-gradient(to right,#8a8a8a 50%,transparent 50%);background-size:4px 2px;"></div>
<svg style="left:36px;top:1418px" width="30" height="24" viewBox="0 0 32 26" preserveAspectRatio="none"><defs><linearGradient id="fg" x1="0" y1="0" x2="1" y2="1"><stop offset="0" stop-color="#fffbe6"/><stop offset="0.45" stop-color="#f2d27a"/><stop offset="0.8" stop-color="#c8982e"/><stop offset="1" stop-color="#6a4808"/></linearGradient></defs><path d="M1 3 Q1 1 3 1 L11 1 L13 4 L29 4 Q31 4 31 6 L31 23 Q31 25 29 25 L3 25 Q1 25 1 23 Z" fill="url(#fg)" stroke="#7a6a48" stroke-width="1.2"/><path d="M2 24 H30" stroke="#3a2a10" stroke-width="1.6"/><path d="M2 6 L30 6" stroke="#fff6d0" stroke-width="1" opacity="0.6"/></svg>
<div class="t" style="left:74px;top:1419.0px;font-size:26px;line-height:26px;">Purchased Line Items</div>
</div>
<div class="b" style="left:608px;top:104px;width:2px;height:1436px;background:#9c9c9c;"></div>
<div class="b" style="left:610px;top:104px;width:10px;height:1436px;background:#ffffff;"></div>
<div class="b" style="left:620px;top:104px;width:2px;height:1436px;background:#9c9c9c;"></div>
<div class="b" style="left:622px;top:104px;width:858px;height:1437px;background:#ffffff;border-top:2px solid #dee4e8;"></div>
<div class="b" style="left:622px;top:1510px;width:848px;height:30px;background:#f1f2f4;"></div>
<div class="b" style="left:622px;top:162px;width:848px;height:1368px;background:#ffffff;border-radius:0 0 10px 10px;"></div>
<div class="b" style="left:622px;top:106px;width:848px;height:56px;background:#f1f2f4;"></div>
<div class="b" style="left:623px;top:112px;width:178px;height:50px;background:#fefefe;border:3px solid #e1e6ea;border-bottom:none;"></div>
<div class="t" style="left:647px;top:122.0px;font-size:26px;line-height:26px;font-weight:bold;color:#636363;">Edit Fields</div>
<div class="b" style="left:809px;top:112px;width:187px;height:50px;background:#e1e6ea;border-radius:3px 3px 0 0;"></div>
<div class="t" style="left:834px;top:122.0px;font-size:26px;line-height:26px;font-weight:bold;color:#222;">Edit Field</div>
<svg style="left:964px;top:127px" width="20" height="20"><path d="M2 2 L18 18 M18 2 L2 18" stroke="#8d8d8d" stroke-width="3.5"/></svg>
<div class="b" style="left:643px;top:170px;width:80px;height:56px;background:#fdfdfd;border:2px solid #d8d8d8;border-bottom-color:#bcbcbc;border-radius:6px;"></div>
<div class="t" style="left:658px;top:187.4px;font-size:22px;line-height:22px;font-weight:bold;color:#222;">Save</div>
<div class="b" style="left:729px;top:170px;width:101px;height:56px;background:#fdfdfd;border:2px solid #d8d8d8;border-bottom-color:#bcbcbc;border-radius:6px;"></div>
<div class="t" style="left:744px;top:187.4px;font-size:22px;line-height:22px;font-weight:bold;color:#222;">Cancel</div>
<div class="b" style="left:887px;top:1190px;width:307px;height:72px;background:#fff;border:2px solid #e8ebee;border-radius:8px;"></div>
<div class="b" style="left:1214px;top:1226px;width:28px;height:32px;background:#cfd3d7;border-radius:50%;"></div>
<div class="b" style="left:630px;top:250px;width:832px;height:4px;background:#999999;"></div>
<div class="b" style="left:1480px;top:104px;width:490px;height:1437px;background:#eff1f3;border-left:2px solid #dee4e8;border-right:2px solid #dee4e8;border-top:2px solid #dee4e8;"></div>
<svg style="left:1494px;top:116px;filter:blur(0.5px)" width="20" height="24"><path d="M5.5 5.5 L13.5 13 L5.5 20" fill="none" stroke="#747474" stroke-width="4.4"/></svg>
<div class="t" style="left:1900px;top:113.7px;font-size:24px;line-height:24px;font-weight:bold;color:#222;">Help</div>
<div class="t" style="left:1492px;top:151.7px;font-size:24px;line-height:24px;color:#222;">The properties of this field can be</div>
<div class="t" style="left:1492px;top:179.7px;font-size:24px;line-height:24px;color:#222;">customized.</div>
<div class="t" style="left:1492px;top:235.7px;font-size:24px;line-height:24px;color:#222;">Click <b>Clone</b> to create a new field with the</div>
<div class="t" style="left:1492px;top:263.7px;font-size:24px;line-height:24px;color:#222;">same properties.</div>
<div class="b" style="left:162px;top:1540px;width:1808px;height:2px;background:#dee4e8;"></div>
<div class="b" style="left:163px;top:1542px;width:87px;height:42px;background:#ffffff;border-left:2px solid #e3e5e9;border-right:2px solid #e3e5e9;"></div>
<div class="t" style="left:177px;top:1554.9px;font-size:22px;line-height:22px;font-weight:bold;color:#222;">Home</div>
<div class="b" style="left:258px;top:1542px;width:95px;height:42px;background:#ffffff;border-left:2px solid #e3e5e9;border-right:2px solid #e3e5e9;"></div>
<div class="t" style="left:272px;top:1554.9px;font-size:22px;line-height:22px;font-weight:bold;color:#222;">Studio</div>
<div class="b" style="left:361px;top:1542px;width:186px;height:42px;background:#ffffff;border-left:2px solid #e3e5e9;border-right:2px solid #e3e5e9;"></div>
<div class="t" style="left:375px;top:1554.9px;font-size:22px;line-height:22px;font-weight:bold;color:#222;">Module Builder</div>
<div class="b" style="left:555px;top:1542px;width:227px;height:42px;background:#ffffff;border-left:2px solid #e3e5e9;border-right:2px solid #e3e5e9;"></div>
<div class="t" style="left:569px;top:1554.9px;font-size:22px;line-height:22px;font-weight:bold;color:#222;">Sugar Portal Editor</div>
<div class="b" style="left:791px;top:1542px;width:204px;height:42px;background:#ffffff;border-left:2px solid #e3e5e9;border-right:2px solid #e3e5e9;"></div>
<div class="t" style="left:804px;top:1554.9px;font-size:22px;line-height:22px;font-weight:bold;color:#222;">Dropdown Editor</div>
<div class="b" style="left:118px;top:82px;width:1886px;height:1502px;background:rgba(0,0,0,0.24);"></div>
<div class="b" style="left:0px;top:0px;width:118px;height:1584px;background:#3578c4;"></div>
<div class="b" style="left:0px;top:80px;width:118px;height:2px;background:#bcd6f2;"></div>
<div class="b" style="left:0px;top:242px;width:118px;height:2px;background:#bcd6f2;"></div>
<div class="b" style="left:0px;top:564px;width:118px;height:80px;background:#265b97;"></div>
<div class="b" style="left:0px;top:1356px;width:118px;height:2px;background:#bcd6f2;"></div>
<svg style="left:0;top:0" width="118" height="80"><path d="M44 28 H72 M44 40 H72 M44 52 H72" fill="none" stroke="#fff" stroke-width="4" stroke-linecap="round" stroke-linejoin="round"/></svg>
<svg style="left:0;top:90" width="118" height="60"><path d="M46 46 V27.5 L58 18 L70 27.5 V46 H62 V38 H54 V46 Z" fill="none" stroke="#fff" stroke-width="4" stroke-linecap="round" stroke-linejoin="round"/></svg>
<svg style="left:0;top:180" width="118" height="44"><path d="M44 22 H72 M58 8 V36" fill="none" stroke="#fff" stroke-width="4" stroke-linecap="round" stroke-linejoin="round"/></svg>
<svg style="left:0;top:260" width="118" height="50"><rect x="46" y="10" width="24" height="28" rx="2" fill="none" stroke="#fff" stroke-width="4" stroke-linecap="round" stroke-linejoin="round"/><path d="M52 16 h4 v4 h-4z M60 16 h4 v4 h-4z M52 24 h4 v4 h-4z M60 24 h4 v4 h-4z M56 30 h4 v8 h-4z" fill="#fff"/></svg>
<svg style="left:0;top:340" width="118" height="50"><ellipse cx="58" cy="18" rx="7" ry="8" fill="none" stroke="#fff" stroke-width="4" stroke-linecap="round" stroke-linejoin="round"/><path d="M53.5 29.5 Q44 31 44 36 V38 H72 V36 Q72 31 62.5 29.5" fill="none" stroke="#fff" stroke-width="4" stroke-linecap="round" stroke-linejoin="round"/></svg>
<svg style="left:0;top:420" width="118" height="50"><path d="M44 11.5 H72 M47.5 19.5 H68.5 M51 27.5 H65 M55.5 36 H60.5" fill="none" stroke="#fff" stroke-width="4" stroke-linecap="round" stroke-linejoin="round"/></svg>
<svg style="left:0;top:500" width="118" height="50"><path d="M58 22 V38 M50 38 H66" fill="none" stroke="#fff" stroke-width="4" stroke-linecap="round" stroke-linejoin="round"/><path d="M48 10 Q57 10 56.5 22 Q48 21 48 10 Z M70 14 Q61 14 59.5 28 Q70 27 70 14 Z" fill="none" stroke="#fff" stroke-width="4" stroke-linecap="round" stroke-linejoin="round"/></svg>
<svg style="left:42px;top:588px" width="32" height="32" viewBox="-16 -16 32 32"><g fill="#fff"><rect x="-5" y="-16" width="10" height="8" rx="1.5" transform="rotate(0)"/><rect x="-5" y="-16" width="10" height="8" rx="1.5" transform="rotate(60)"/><rect x="-5" y="-16" width="10" height="8" rx="1.5" transform="rotate(120)"/><rect x="-5" y="-16" width="10" height="8" rx="1.5" transform="rotate(180)"/><rect x="-5" y="-16" width="10" height="8" rx="1.5" transform="rotate(240)"/><rect x="-5" y="-16" width="10" height="8" rx="1.5" transform="rotate(300)"/><circle r="12.6"/></g><circle r="7.3" fill="none" stroke="#265b97" stroke-width="2.5"/><g stroke="#265b97" stroke-width="1.7"><path d="M0 -8.5 V-12.5" transform="rotate(0)"/><path d="M0 -8.5 V-12.5" transform="rotate(60)"/><path d="M0 -8.5 V-12.5" transform="rotate(120)"/><path d="M0 -8.5 V-12.5" transform="rotate(180)"/><path d="M0 -8.5 V-12.5" transform="rotate(240)"/><path d="M0 -8.5 V-12.5" transform="rotate(300)"/></g><circle r="2" fill="#265b97"/></svg>
<svg style="left:42px;top:1382px" width="32" height="32" viewBox="0 0 32 32"><path d="M2 0 H22 L32 9.6 V30 Q32 32 30 32 H2 Q0 32 0 30 V2 Q0 0 2 0 Z M4 4 V27.8 H28 V12.2 H20 V4 Z" fill="#fff" fill-rule="evenodd"/><rect x="8" y="14" width="16" height="4" rx="2" fill="#fff"/><rect x="8" y="20" width="16" height="4" rx="2" fill="#fff"/></svg>
<svg style="left:42px;top:1462px" width="32" height="32" viewBox="0 0 32 32"><circle cx="16" cy="16" r="16" fill="#fff"/><path d="M11 10.5 Q12 6.5 16 6.5 Q20.5 6.5 20.5 10.5 Q20.5 13 18 14.5 Q16 15.7 16 18 V19.5" fill="none" stroke="#3578c4" stroke-width="3.4" stroke-linecap="butt"/><circle cx="16" cy="24" r="2.2" fill="#3578c4"/></svg>
<svg style="left:42px;top:1542px" width="32" height="32" viewBox="0 0 32 32"><path d="M16 0 L32 6 V10.7 L16 17 L0 10.7 V6 Z" fill="#fff"/><path d="M0 14 L16 20 L32 14 V18.4 L16 24 L0 18.4 Z" fill="#fff"/><path d="M0 21.6 L16 27.6 L32 21.6 V26 L16 32 L0 26 Z" fill="#fff"/></svg>
<div class="b" style="left:118px;top:0px;width:1886px;height:80px;background:#fff;"></div>
<div class="b" style="left:118px;top:80px;width:1886px;height:2px;background:#e3e7eb;"></div>
<svg style="left:144px;top:21px" width="38" height="38" viewBox="0 0 38 38"><path d="M19 0 L37 6.5 V12.5 L19 19 L1 12.5 V6.5 Z" fill="#121820"/><path d="M1 16.5 L19 23 L37 16.5 V22.5 L19 29 L1 22.5 Z" fill="#121820"/><path d="M1 26 L19 32.5 L37 26 V31.5 L19 38 L1 31.5 Z" fill="#121820"/></svg>
<div class="t" style="left:189px;top:18.7px;font-size:37px;line-height:37px;font-weight:bold;color:#121820;letter-spacing:-0.9px;">sugar</div>
<div class="t" style="left:283px;top:18.7px;font-size:37px;line-height:37px;color:#2c3138;letter-spacing:0.6px;">crm</div>
<div class="b" style="left:462px;top:12px;width:1200px;height:56px;background:#f1f2f4;border:2px solid #e4e7ea;border-radius:12px;"></div>
<div class="t" style="left:1020.5px;top:27.0px;font-size:26px;line-height:26px;color:#8d9398;letter-spacing:0.3px;-webkit-text-stroke:0.35px #8d9398;">Search</div>
<svg style="left:1618px;top:24px" width="30" height="30" viewBox="0 0 30 30"><circle cx="13" cy="13" r="8" fill="none" stroke="#6f7479" stroke-width="3.6"/><path d="M19 19 L26 26" stroke="#6f7479" stroke-width="4" stroke-linecap="round"/></svg>
<svg style="left:1815px;top:16px" width="56" height="56" viewBox="0 0 56 56"><circle cx="28" cy="28" r="28" fill="#6f7479"/><path d="M21.5 34 V25 Q21.5 17 28 17 Q34.5 17 34.5 25 V34 Q34.5 35 37 35.5 H19 Q21.5 35 21.5 34 Z" fill="none" stroke="#fff" stroke-width="3.2" stroke-linejoin="round"/><path d="M26 39.5 H30" stroke="#fff" stroke-width="2.6" stroke-linecap="round"/></svg>
<svg style="left:1904px;top:17px" width="54" height="54" viewBox="0 0 54 54">
<defs><clipPath id="av"><circle cx="27" cy="27" r="27"/></clipPath>
<radialGradient id="skin" cx="0.45" cy="0.4" r="0.6"><stop offset="0" stop-color="#f6d8c4"/><stop offset="0.7" stop-color="#e8b898"/><stop offset="1" stop-color="#c89070"/></radialGradient></defs>
<g clip-path="url(#av)">
<rect width="54" height="54" fill="#fafafa"/>
<path d="M16 38 H37 V54 H16 Z" fill="#e2aa88"/>
<path d="M6 54 L10 48 L17 40 L20 44 L22 54 Z" fill="#111"/>
<path d="M48 54 L44 48 L37 41 L34 44 L32 54 Z" fill="#111"/>
<path d="M14 47 L20 44 L22 54 H13 Z" fill="#f4f4f4"/>
<path d="M40 47 L34 44 L32 54 H41 Z" fill="#f4f4f4"/>
<ellipse cx="26.5" cy="27" rx="15.5" ry="19" fill="url(#skin)"/>
<path d="M9.5 25 Q8 0 27 0 Q46 0 43.5 25 Q42 13 38 10.5 Q27 6 16 10.5 Q11 14 9.5 25 Z" fill="#2e2119"/>
<ellipse cx="20" cy="25" rx="3" ry="1.3" fill="#6a5a55"/><ellipse cx="33" cy="25" rx="3" ry="1.3" fill="#6a5a55"/>
<path d="M19.5 36.5 Q26.5 38 33.5 36.5 Q31 42 26.5 42 Q22 42 19.5 36.5 Z" fill="#f2e8e8" stroke="#c88890" stroke-width="1"/>
</g></svg>
<svg style="left:1966px;top:36px" width="24" height="16" viewBox="0 0 24 16"><path d="M3 3 L12 12 L21 3" fill="none" stroke="#6f7479" stroke-width="3.6" stroke-linecap="round" stroke-linejoin="round"/></svg>
<div style="position:absolute;left:532px;top:268px;width:1028px;height:987px;box-sizing:border-box;border:2px solid #5d5d5d;background:#fff;box-shadow:0 5px 22px 2px rgba(0,0,0,0.55);">
<div class="b" style="left:0px;top:0px;width:1024px;height:71px;background:#f0f1f3;border-bottom:2px solid #e4e7ea;"></div>
<div class="t" style="left:17px;top:23.7px;font-size:24px;line-height:24px;font-weight:bold;color:#2a2b2d;">Formula Builder</div>
<svg style="left:966px;top:9px" width="20" height="20"><path d="M2 2 L18 18 M18 2 L2 18" stroke="#ffffff" stroke-width="3.2" stroke-linecap="round"/></svg>
<div class="b" style="left:4px;top:85px;width:994px;height:53px;background:#f0f1f3;border-top:2px solid #e6e8eb;border-bottom:2px solid #e6e8eb;"></div>
<div class="b" style="left:6px;top:87px;width:233px;height:44px;background:#fff;border:2px solid #e7e9ec;border-bottom-color:#b9bbbe;border-radius:6px;"></div>
<svg style="left:14px;top:94px" width="20" height="30" viewBox="0 0 20 30"><g fill="none" stroke-linecap="round"><path d="M16.5 8.5 Q14.5 5.5 9 5.5 Q2.5 5.5 2.5 10 Q2.5 13.5 9 14.5 Q16.5 15.5 16.5 19.8 Q16.5 24.2 9 24.2 Q3 24.2 1.5 20.5 M9 1.5 V5.5 M9 24.2 V28" stroke="#8a8a8a" stroke-width="5.2"/><path d="M16.5 8.5 Q14.5 5.5 9 5.5 Q2.5 5.5 2.5 10 Q2.5 13.5 9 14.5 Q16.5 15.5 16.5 19.8 Q16.5 24.2 9 24.2 Q3 24.2 1.5 20.5 M9 1.5 V5.5 M9 24.2 V28" stroke="#b4b4b4" stroke-width="2.2"/></g></svg>
<div class="t" style="left:43px;top:98.6px;font-size:27px;line-height:27px;font-weight:bold;color:#2a2b2d;letter-spacing:1.3px;-webkit-text-stroke:0.7px #2a2b2d;">Related Field</div>
<div class="b" style="left:251px;top:87px;width:135px;height:44px;background:#fff;border:2px solid #e7e9ec;border-bottom-color:#b9bbbe;border-radius:6px;"></div>
<svg style="left:252px;top:92px" width="30" height="34" viewBox="0 0 30 34">
<defs><linearGradient id="flg" x1="0" y1="0" x2="0" y2="1"><stop offset="0" stop-color="#f2f2f2"/><stop offset="0.5" stop-color="#a8a8a8"/><stop offset="1" stop-color="#c8c8c8"/></linearGradient></defs>
<rect x="25" y="1" width="4" height="32" fill="#b8b8b8"/>
<path d="M12 2 Q19 0 25 1.5 V20 Q19 19 12 20 Z" fill="url(#flg)"/>
<rect x="8" y="20" width="3" height="9" fill="#cdcdcd"/>
<path d="M2 3.2 H15.5 V7.5 H8.5 L12 12 L8.5 16.5 H15.5 V20.7 H2 V17 L6.5 12 L2 7 Z" fill="#4ccb44" stroke="#2a6a20" stroke-width="1.2" stroke-linejoin="miter"/>
</svg>
<div class="t" style="left:288px;top:98.6px;font-size:27px;line-height:27px;font-weight:bold;color:#2a2b2d;letter-spacing:1.1px;-webkit-text-stroke:0.7px #2a2b2d;">Rollup</div>
<div class="b" style="left:4px;top:138px;width:1004px;height:263px;background:#fff;border:2px solid #e3e6ea;border-radius:8px;"></div>
<svg style="left:988px;top:381px" width="18" height="18"><path d="M2 16 L16 2 M9 16 L16 9" stroke="#555" stroke-width="1.6"/></svg>
<svg style="left:490px;top:404px" width="44" height="12"><rect x="2" y="2" width="4" height="4" fill="#a9b0b8"/><rect x="14" y="2" width="4" height="4" fill="#a9b0b8"/><rect x="26" y="2" width="4" height="4" fill="#a9b0b8"/><rect x="38" y="2" width="4" height="4" fill="#a9b0b8"/><rect x="8" y="8" width="4" height="4" fill="#a9b0b8"/><rect x="20" y="8" width="4" height="4" fill="#a9b0b8"/><rect x="32" y="8" width="4" height="4" fill="#a9b0b8"/></svg>
<div class="b" style="left:4px;top:430px;width:1016px;height:2px;background:#9e9e9e;"></div>
<div class="b" style="left:5px;top:437px;width:282px;height:46px;background:#fff;border:2px solid #e5e8eb;border-radius:6px;"></div>
<div class="t" style="left:11px;top:447.0px;font-size:26px;line-height:26px;color:#8c8c8c;">Search Functions...</div>
<div class="b" style="left:294px;top:435px;width:32px;height:47px;background:#fff;border:2px solid #e5e8eb;border-radius:6px;"></div>
<svg style="left:298px;top:445px" width="24" height="24"><path d="M2 2 L22 22 M22 2 L2 22" stroke="#9a9a9a" stroke-width="3.2"/></svg>
<div class="b" style="left:515px;top:437px;width:282px;height:46px;background:#fff;border:2px solid #e5e8eb;border-radius:6px;"></div>
<div class="t" style="left:521px;top:447.0px;font-size:26px;line-height:26px;color:#8c8c8c;">Search Fields...</div>
<div class="b" style="left:804px;top:435px;width:32px;height:47px;background:#fff;border:2px solid #e5e8eb;border-radius:6px;"></div>
<svg style="left:808px;top:445px" width="24" height="24"><path d="M2 2 L22 22 M22 2 L2 22" stroke="#9a9a9a" stroke-width="3.2"/></svg>
<div class="b" style="left:4px;top:484px;width:408px;height:39px;background:#f0f1f3;"></div>
<div class="b" style="left:412px;top:484px;width:2px;height:39px;background:#e3e7eb;"></div>
<div class="b" style="left:414px;top:484px;width:48px;height:39px;background:#dbeafa;"></div>
<div class="b" style="left:462px;top:484px;width:40px;height:39px;background:#f7f8fa;"></div>
<svg style="left:446px;top:494px" width="16" height="20" viewBox="0 0 16 20"><path d="M0 8 L8 0 L16 8 Z" fill="#5a5a5a"/><path d="M1 12 L15 12 L8 19 Z" fill="#eef4fb" stroke="#9a9a9a" stroke-width="1.6"/></svg>
<div class="t" style="left:143px;top:490.8px;font-size:25px;line-height:25px;color:#222;">Functions</div>
<div class="b" style="left:514px;top:484px;width:409px;height:39px;background:#dbeafa;"></div>
<div class="b" style="left:923px;top:484px;width:49px;height:39px;background:#f0f1f3;"></div>
<div class="b" style="left:972px;top:484px;width:40px;height:39px;background:#f7f8fa;"></div>
<svg style="left:906px;top:494px" width="16" height="20" viewBox="0 0 16 20"><path d="M0 8 L8 0 L16 8 Z" fill="#5a5a5a"/><path d="M1 12 L15 12 L8 19 Z" fill="#eef4fb" stroke="#9a9a9a" stroke-width="1.6"/></svg>
<div class="t" style="left:674px;top:490.8px;font-size:25px;line-height:25px;color:#222;">Fields</div>
<div style="position:absolute;left:4px;top:523px;width:1010px;height:400px;overflow:hidden;">
<div class="b" style="left:0px;top:0px;width:408px;height:48px;background:#ffffff;border-top:2px solid #e3e7eb;"></div>
<div class="b" style="left:408px;top:0px;width:52px;height:48px;background:#ffffff;border-top:2px solid #e3e7eb;border-left:2px solid #e3e7eb;border-right:2px solid #e3e7eb;"></div>
<div class="t" style="left:4px;top:12.7px;font-size:24px;line-height:24px;color:#222;">dayofmonth</div>
<div class="b" style="left:414px;top:6px;width:32px;height:32px;background:#d8d8d8;box-shadow:inset -4px -4px 3px -1px #a6a6a6, inset 4px 4px 3px -1px #cbcbcb;"></div>
<div class="t" style="left:421.5px;top:8.8px;font-size:25px;line-height:25px;font-weight:bold;color:#111;-webkit-text-stroke:0.5px #111;filter:blur(0.3px);">#</div>
<div class="b" style="left:510px;top:0px;width:409px;height:48px;background:#ffffff;border-top:2px solid #e3e7eb;"></div>
<div class="b" style="left:917px;top:0px;width:53px;height:48px;background:#ffffff;border-top:2px solid #e3e7eb;border-left:2px solid #e3e7eb;border-right:2px solid #e3e7eb;"></div>
<div class="t" style="left:514px;top:12.7px;font-size:24px;line-height:24px;color:#222;">$account_type</div>
<div class="b" style="left:924px;top:6px;width:32px;height:32px;background:#d8d8d8;box-shadow:inset -4px -4px 3px -1px #a6a6a6, inset 4px 4px 3px -1px #cbcbcb;"></div>
<div class="t" style="left:930px;top:8.8px;font-size:25px;line-height:25px;font-weight:bold;color:#111;-webkit-text-stroke:0.5px #111;filter:blur(0.3px);">A</div>
<div class="b" style="left:0px;top:48px;width:408px;height:48px;background:#f0f1f3;border-top:2px solid #e3e7eb;"></div>
<div class="b" style="left:408px;top:48px;width:52px;height:48px;background:#f0f1f3;border-top:2px solid #e3e7eb;border-left:2px solid #e3e7eb;border-right:2px solid #e3e7eb;"></div>
<div class="t" style="left:4px;top:60.7px;font-size:24px;line-height:24px;color:#222;">dayofweek</div>
<div class="b" style="left:414px;top:54px;width:32px;height:32px;background:#d8d8d8;box-shadow:inset -4px -4px 3px -1px #a6a6a6, inset 4px 4px 3px -1px #cbcbcb;"></div>
<div class="t" style="left:421.5px;top:56.8px;font-size:25px;line-height:25px;font-weight:bold;color:#111;-webkit-text-stroke:0.5px #111;filter:blur(0.3px);">#</div>
<div class="b" style="left:510px;top:48px;width:409px;height:48px;background:#f0f1f3;border-top:2px solid #e3e7eb;"></div>
<div class="b" style="left:917px;top:48px;width:53px;height:48px;background:#f0f1f3;border-top:2px solid #e3e7eb;border-left:2px solid #e3e7eb;border-right:2px solid #e3e7eb;"></div>
<div class="t" style="left:514px;top:60.7px;font-size:24px;line-height:24px;color:#222;">$annual_revenue</div>
<div class="b" style="left:924px;top:54px;width:32px;height:32px;background:#d8d8d8;box-shadow:inset -4px -4px 3px -1px #a6a6a6, inset 4px 4px 3px -1px #cbcbcb;"></div>
<div class="t" style="left:930px;top:56.8px;font-size:25px;line-height:25px;font-weight:bold;color:#111;-webkit-text-stroke:0.5px #111;filter:blur(0.3px);">A</div>
<div class="b" style="left:0px;top:96px;width:408px;height:48px;background:#ffffff;border-top:2px solid #e3e7eb;"></div>
<div class="b" style="left:408px;top:96px;width:52px;height:48px;background:#ffffff;border-top:2px solid #e3e7eb;border-left:2px solid #e3e7eb;border-right:2px solid #e3e7eb;"></div>
<div class="t" style="left:4px;top:108.7px;font-size:24px;line-height:24px;color:#222;">daysUntil</div>
<div class="b" style="left:414px;top:102px;width:32px;height:32px;background:#d8d8d8;box-shadow:inset -4px -4px 3px -1px #a6a6a6, inset 4px 4px 3px -1px #cbcbcb;"></div>
<div class="t" style="left:421.5px;top:104.8px;font-size:25px;line-height:25px;font-weight:bold;color:#111;-webkit-text-stroke:0.5px #111;filter:blur(0.3px);">#</div>
<div class="b" style="left:510px;top:96px;width:409px;height:48px;background:#ffffff;border-top:2px solid #e3e7eb;"></div>
<div class="b" style="left:917px;top:96px;width:53px;height:48px;background:#ffffff;border-top:2px solid #e3e7eb;border-left:2px solid #e3e7eb;border-right:2px solid #e3e7eb;"></div>
<div class="t" style="left:514px;top:108.7px;font-size:24px;line-height:24px;color:#222;">$billing_address_city</div>
<div class="b" style="left:924px;top:102px;width:32px;height:32px;background:#d8d8d8;box-shadow:inset -4px -4px 3px -1px #a6a6a6, inset 4px 4px 3px -1px #cbcbcb;"></div>
<div class="t" style="left:930px;top:104.8px;font-size:25px;line-height:25px;font-weight:bold;color:#111;-webkit-text-stroke:0.5px #111;filter:blur(0.3px);">A</div>
<div class="b" style="left:0px;top:144px;width:408px;height:48px;background:#f0f1f3;border-top:2px solid #e3e7eb;"></div>
<div class="b" style="left:408px;top:144px;width:52px;height:48px;background:#f0f1f3;border-top:2px solid #e3e7eb;border-left:2px solid #e3e7eb;border-right:2px solid #e3e7eb;"></div>
<div class="t" style="left:4px;top:156.7px;font-size:24px;line-height:24px;color:#222;">hoursUntil</div>
<div class="b" style="left:414px;top:150px;width:32px;height:32px;background:#d8d8d8;box-shadow:inset -4px -4px 3px -1px #a6a6a6, inset 4px 4px 3px -1px #cbcbcb;"></div>
<div class="t" style="left:421.5px;top:152.8px;font-size:25px;line-height:25px;font-weight:bold;color:#111;-webkit-text-stroke:0.5px #111;filter:blur(0.3px);">#</div>
<div class="b" style="left:510px;top:144px;width:409px;height:48px;background:#f0f1f3;border-top:2px solid #e3e7eb;"></div>
<div class="b" style="left:917px;top:144px;width:53px;height:48px;background:#f0f1f3;border-top:2px solid #e3e7eb;border-left:2px solid #e3e7eb;border-right:2px solid #e3e7eb;"></div>
<div class="t" style="left:514px;top:156.7px;font-size:24px;line-height:24px;color:#222;">$billing_address_country</div>
<div class="b" style="left:924px;top:150px;width:32px;height:32px;background:#d8d8d8;box-shadow:inset -4px -4px 3px -1px #a6a6a6, inset 4px 4px 3px -1px #cbcbcb;"></div>
<div class="t" style="left:930px;top:152.8px;font-size:25px;line-height:25px;font-weight:bold;color:#111;-webkit-text-stroke:0.5px #111;filter:blur(0.3px);">A</div>
<div class="b" style="left:0px;top:192px;width:408px;height:48px;background:#ffffff;border-top:2px solid #e3e7eb;"></div>
<div class="b" style="left:408px;top:192px;width:52px;height:48px;background:#ffffff;border-top:2px solid #e3e7eb;border-left:2px solid #e3e7eb;border-right:2px solid #e3e7eb;"></div>
<div class="t" style="left:4px;top:204.7px;font-size:24px;line-height:24px;color:#222;">monthofyear</div>
<div class="b" style="left:414px;top:198px;width:32px;height:32px;background:#d8d8d8;box-shadow:inset -4px -4px 3px -1px #a6a6a6, inset 4px 4px 3px -1px #cbcbcb;"></div>
<div class="t" style="left:421.5px;top:200.8px;font-size:25px;line-height:25px;font-weight:bold;color:#111;-webkit-text-stroke:0.5px #111;filter:blur(0.3px);">#</div>
<div class="b" style="left:510px;top:192px;width:409px;height:48px;background:#ffffff;border-top:2px solid #e3e7eb;"></div>
<div class="b" style="left:917px;top:192px;width:53px;height:48px;background:#ffffff;border-top:2px solid #e3e7eb;border-left:2px solid #e3e7eb;border-right:2px solid #e3e7eb;"></div>
<div class="t" style="left:514px;top:204.7px;font-size:24px;line-height:24px;color:#222;">$billing_address_postalcode</div>
<div class="b" style="left:924px;top:198px;width:32px;height:32px;background:#d8d8d8;box-shadow:inset -4px -4px 3px -1px #a6a6a6, inset 4px 4px 3px -1px #cbcbcb;"></div>
<div class="t" style="left:930px;top:200.8px;font-size:25px;line-height:25px;font-weight:bold;color:#111;-webkit-text-stroke:0.5px #111;filter:blur(0.3px);">A</div>
<div class="b" style="left:0px;top:240px;width:408px;height:48px;background:#f0f1f3;border-top:2px solid #e3e7eb;"></div>
<div class="b" style="left:408px;top:240px;width:52px;height:48px;background:#f0f1f3;border-top:2px solid #e3e7eb;border-left:2px solid #e3e7eb;border-right:2px solid #e3e7eb;"></div>
<div class="t" style="left:4px;top:252.7px;font-size:24px;line-height:24px;color:#222;">year</div>
<div class="b" style="left:414px;top:246px;width:32px;height:32px;background:#d8d8d8;box-shadow:inset -4px -4px 3px -1px #a6a6a6, inset 4px 4px 3px -1px #cbcbcb;"></div>
<div class="t" style="left:421.5px;top:248.8px;font-size:25px;line-height:25px;font-weight:bold;color:#111;-webkit-text-stroke:0.5px #111;filter:blur(0.3px);">#</div>
<div class="b" style="left:510px;top:240px;width:409px;height:48px;background:#f0f1f3;border-top:2px solid #e3e7eb;"></div>
<div class="b" style="left:917px;top:240px;width:53px;height:48px;background:#f0f1f3;border-top:2px solid #e3e7eb;border-left:2px solid #e3e7eb;border-right:2px solid #e3e7eb;"></div>
<div class="t" style="left:514px;top:252.7px;font-size:24px;line-height:24px;color:#222;">$billing_address_state</div>
<div class="b" style="left:924px;top:246px;width:32px;height:32px;background:#d8d8d8;box-shadow:inset -4px -4px 3px -1px #a6a6a6, inset 4px 4px 3px -1px #cbcbcb;"></div>
<div class="t" style="left:930px;top:248.8px;font-size:25px;line-height:25px;font-weight:bold;color:#111;-webkit-text-stroke:0.5px #111;filter:blur(0.3px);">A</div>
<div class="b" style="left:0px;top:288px;width:408px;height:48px;background:#ffffff;border-top:2px solid #e3e7eb;"></div>
<div class="b" style="left:408px;top:288px;width:52px;height:48px;background:#ffffff;border-top:2px solid #e3e7eb;border-left:2px solid #e3e7eb;border-right:2px solid #e3e7eb;"></div>
<div class="t" style="left:4px;top:300.7px;font-size:24px;line-height:24px;color:#222;">abs</div>
<div class="b" style="left:414px;top:294px;width:32px;height:32px;background:#d8d8d8;box-shadow:inset -4px -4px 3px -1px #a6a6a6, inset 4px 4px 3px -1px #cbcbcb;"></div>
<div class="t" style="left:421.5px;top:296.8px;font-size:25px;line-height:25px;font-weight:bold;color:#111;-webkit-text-stroke:0.5px #111;filter:blur(0.3px);">#</div>
<div class="b" style="left:510px;top:288px;width:409px;height:48px;background:#ffffff;border-top:2px solid #e3e7eb;"></div>
<div class="b" style="left:917px;top:288px;width:53px;height:48px;background:#ffffff;border-top:2px solid #e3e7eb;border-left:2px solid #e3e7eb;border-right:2px solid #e3e7eb;"></div>
<div class="t" style="left:514px;top:300.7px;font-size:24px;line-height:24px;color:#222;">$billing_address_street</div>
<div class="b" style="left:924px;top:294px;width:32px;height:32px;background:#d8d8d8;box-shadow:inset -4px -4px 3px -1px #a6a6a6, inset 4px 4px 3px -1px #cbcbcb;"></div>
<div class="t" style="left:930px;top:296.8px;font-size:25px;line-height:25px;font-weight:bold;color:#111;-webkit-text-stroke:0.5px #111;filter:blur(0.3px);">A</div>
<div class="b" style="left:0px;top:336px;width:408px;height:48px;background:#f0f1f3;border-top:2px solid #e3e7eb;"></div>
<div class="b" style="left:408px;top:336px;width:52px;height:48px;background:#f0f1f3;border-top:2px solid #e3e7eb;border-left:2px solid #e3e7eb;border-right:2px solid #e3e7eb;"></div>
<div class="t" style="left:4px;top:348.7px;font-size:24px;line-height:24px;color:#222;">add</div>
<div class="b" style="left:414px;top:342px;width:32px;height:32px;background:#d8d8d8;box-shadow:inset -4px -4px 3px -1px #a6a6a6, inset 4px 4px 3px -1px #cbcbcb;"></div>
<div class="t" style="left:421.5px;top:344.8px;font-size:25px;line-height:25px;font-weight:bold;color:#111;-webkit-text-stroke:0.5px #111;filter:blur(0.3px);">#</div>
<div class="b" style="left:510px;top:336px;width:409px;height:48px;background:#f0f1f3;border-top:2px solid #e3e7eb;"></div>
<div class="b" style="left:917px;top:336px;width:53px;height:48px;background:#f0f1f3;border-top:2px solid #e3e7eb;border-left:2px solid #e3e7eb;border-right:2px solid #e3e7eb;"></div>
<div class="t" style="left:514px;top:348.7px;font-size:24px;line-height:24px;color:#222;">$billing_address_street_2</div>
<div class="b" style="left:924px;top:342px;width:32px;height:32px;background:#d8d8d8;box-shadow:inset -4px -4px 3px -1px #a6a6a6, inset 4px 4px 3px -1px #cbcbcb;"></div>
<div class="t" style="left:930px;top:344.8px;font-size:25px;line-height:25px;font-weight:bold;color:#111;-webkit-text-stroke:0.5px #111;filter:blur(0.3px);">A</div>
<div class="b" style="left:0px;top:384px;width:408px;height:48px;background:#ffffff;border-top:2px solid #e3e7eb;"></div>
<div class="b" style="left:408px;top:384px;width:52px;height:48px;background:#ffffff;border-top:2px solid #e3e7eb;border-left:2px solid #e3e7eb;border-right:2px solid #e3e7eb;"></div>
<div class="t" style="left:4px;top:396.7px;font-size:24px;line-height:24px;color:#222;">and</div>
<div class="b" style="left:414px;top:390px;width:32px;height:32px;background:#d8d8d8;box-shadow:inset -4px -4px 3px -1px #a6a6a6, inset 4px 4px 3px -1px #cbcbcb;"></div>
<div class="t" style="left:421.5px;top:392.8px;font-size:25px;line-height:25px;font-weight:bold;color:#111;-webkit-text-stroke:0.5px #111;filter:blur(0.3px);">#</div>
<div class="b" style="left:510px;top:384px;width:409px;height:48px;background:#ffffff;border-top:2px solid #e3e7eb;"></div>
<div class="b" style="left:917px;top:384px;width:53px;height:48px;background:#ffffff;border-top:2px solid #e3e7eb;border-left:2px solid #e3e7eb;border-right:2px solid #e3e7eb;"></div>
<div class="t" style="left:514px;top:396.7px;font-size:24px;line-height:24px;color:#222;">$billing_address_street_3</div>
<div class="b" style="left:924px;top:390px;width:32px;height:32px;background:#d8d8d8;box-shadow:inset -4px -4px 3px -1px #a6a6a6, inset 4px 4px 3px -1px #cbcbcb;"></div>
<div class="t" style="left:930px;top:392.8px;font-size:25px;line-height:25px;font-weight:bold;color:#111;-webkit-text-stroke:0.5px #111;filter:blur(0.3px);">A</div>
</div>
<div class="b" style="left:838px;top:927px;width:100px;height:55px;background:#fff;border:2px solid #e3e3e3;border-bottom-color:#cfcfcf;border-radius:7px;"></div>
<div class="t" style="left:852px;top:944.4px;font-size:22px;line-height:22px;font-weight:bold;color:#2a2b2d;">Cancel</div>
<div class="b" style="left:945px;top:927px;width:78px;height:55px;background:#fff;border:2px solid #e3e3e3;border-bottom-color:#cfcfcf;border-radius:7px;"></div>
<div class="t" style="left:959px;top:944.4px;font-size:22px;line-height:22px;font-weight:bold;color:#2a2b2d;">Save</div>
</div>
</body></html>
